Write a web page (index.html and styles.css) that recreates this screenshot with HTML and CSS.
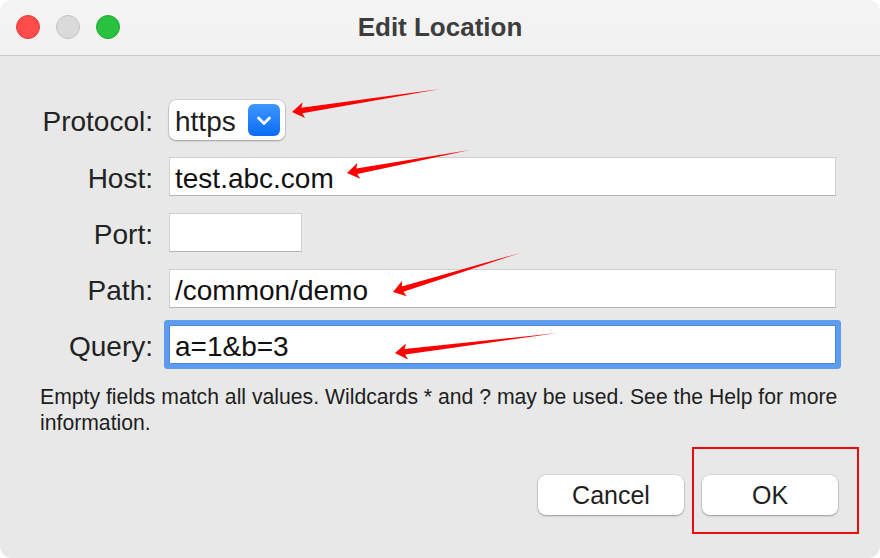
FILE: index.html
```html
<!DOCTYPE html>
<html>
<head>
<meta charset="utf-8">
<link rel="stylesheet" href="styles.css">
</head>
<body>
<div class="window">
  <div class="titlebar">
    <div class="lights">
      <span class="light red"></span>
      <span class="light gray"></span>
      <span class="light green"></span>
    </div>
    <div class="title">Edit Location</div>
    <div></div>
  </div>
  <div class="content">
    <div class="form">
      <label class="lbl">Protocol:</label>
      <div class="combo">
        <span class="combo-text">https</span>
        <span class="combo-btn">
          <svg width="16" height="11" viewBox="0 0 16 11"><polyline points="2.5,3 8,8.5 13.5,3" fill="none" stroke="#fff" stroke-width="2.8" stroke-linecap="round" stroke-linejoin="round"/></svg>
        </span>
      </div>
      <label class="lbl">Host:</label>
      <div class="field">test.abc.com</div>
      <label class="lbl">Port:</label>
      <div class="field port"></div>
      <label class="lbl">Path:</label>
      <div class="field">/common/demo</div>
      <label class="lbl">Query:</label>
      <div class="field focused">a=1&amp;b=3</div>
    </div>
    <p class="help">Empty fields match all values. Wildcards * and ? may be used. See the Help for more information.</p>
    <div class="buttons">
      <button class="btn cancel">Cancel</button>
      <button class="btn ok">OK</button>
    </div>
  </div>
  <svg class="annotations" width="880" height="558" viewBox="0 0 880 558">
    <g fill="#ff0000">
      <polygon transform="translate(292,112) rotate(-8.83)" points="0,0 12,-8 10,-2.8 150,0 10,2.8 12,8"/>
      <polygon transform="translate(347,173) rotate(-10.59)" points="0,0 12,-8 10,-2.8 125,0 10,2.8 12,8"/>
      <polygon transform="translate(393,292) rotate(-17.07)" points="0,0 12,-8 10,-2.8 133,0 10,2.8 12,8"/>
      <polygon transform="translate(395,353) rotate(-7.0)" points="0,0 12,-8 10,-2.8 164,0 10,2.8 12,8"/>
    </g>
    <rect x="693" y="448" width="165" height="85" fill="none" stroke="#ec0a0a" stroke-width="2"/>
  </svg>
</div>
</body>
</html>
```

FILE: styles.css
```css
* { box-sizing: border-box; }
html, body { margin: 0; padding: 0; background: #ffffff; }
body { font-family: "Liberation Sans", Arial, sans-serif; color: #1e1e1e; }

.window {
  position: relative;
  width: 880px;
  height: 558px;
  background: #e8e8e8;
  border-radius: 12px;
  overflow: hidden;
  display: flex;
  flex-direction: column;
}

.titlebar {
  height: 56px;
  flex: none;
  display: grid;
  grid-template-columns: 1fr auto 1fr;
  align-items: center;
  background: linear-gradient(#f4f4f5, #f1f1f1);
  border-bottom: 1px solid #c9c9c9;
}
.lights { display: flex; gap: 16px; padding-left: 16px; padding-bottom: 1px; }
.light { width: 24px; height: 24px; border-radius: 50%; display: block; }
.light.red { background: #fe4c4b; border: 1px solid #e13e3b; }
.light.gray { background: #dadada; border: 1px solid #c2c2c2; }
.light.green { background: #29c23e; border: 1px solid #20a932; }
.title {
  font-size: 26px;
  font-weight: bold;
  color: #3d3d3d;
  padding-bottom: 1px;
}

.content { flex: 1; display: flex; flex-direction: column; }

.form {
  margin-top: 44px;
  display: grid;
  grid-template-columns: 153px 1fr;
  column-gap: 16px;
  row-gap: 17px;
  align-items: center;
  padding-right: 44px;
}
.lbl {
  font-size: 28px;
  text-align: right;
  color: #222;
  white-space: nowrap;
  padding-top: 4px;
}

.combo {
  width: 116px;
  height: 40px;
  background: #fff;
  border-radius: 7px;
  box-shadow: 0 0 0 0.5px rgba(0,0,0,0.18), 0 1px 2px rgba(0,0,0,0.25);
  display: flex;
  align-items: center;
  justify-content: space-between;
  padding: 0 5px 0 6px;
}
.combo-text { font-size: 28px; color: #1e1e1e; padding-top: 4px; }
.combo-btn {
  width: 32px;
  height: 32px;
  border-radius: 6px;
  background: linear-gradient(#3d97ff, #0a6cf6);
  display: flex;
  align-items: center;
  justify-content: center;
}
.combo-btn svg { display: block; }

.field {
  height: 39px;
  background: #fff;
  border: 1px solid #d0d0d0;
  border-bottom-color: #b4b4b4;
  font-size: 28px;
  line-height: 35px;
  padding-top: 3px;
  padding-left: 5px;
  color: #111;
  white-space: nowrap;
}
.field.port { width: 133px; }
.field.focused {
  border: 1px solid #4f86d6;
  border-radius: 1px;
  box-shadow: 0 0 0 5px #5b9cf0;
}

.help {
  margin: 20px 40px 0 40px;
  font-size: 21.2px;
  line-height: 26px;
  color: #1e1e1e;
}

.buttons {
  margin-top: 39px;
  display: flex;
  justify-content: flex-end;
  gap: 18px;
  padding-right: 42px;
}
.btn {
  height: 40px;
  border: none;
  background: #fff;
  border-radius: 8px;
  box-shadow: 0 0 0 0.5px rgba(0,0,0,0.15), 0 1px 2px rgba(0,0,0,0.3);
  font-family: "Liberation Sans", Arial, sans-serif;
  font-size: 25px;
  color: #1e1e1e;
  padding: 0;
}
.btn.cancel { width: 146px; }
.btn.ok { width: 136px; }

.annotations {
  position: absolute;
  left: 0;
  top: 0;
  pointer-events: none;
}
```
